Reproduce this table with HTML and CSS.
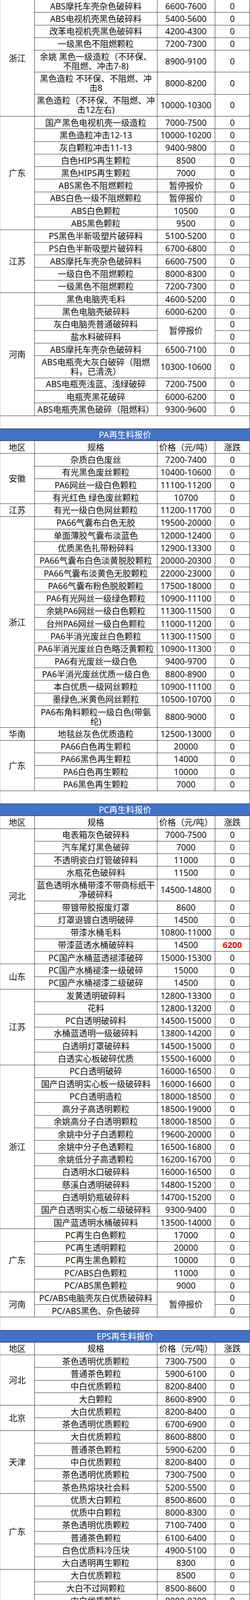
FILE: index.html
```html
<!DOCTYPE html>
<html lang="zh-CN">
<head>
<meta charset="utf-8">
<title>再生料报价</title>
<link rel="stylesheet" href="styles.css">
</head>
<body>
<div class="page">

<section class="tbl">
  <div class="region"><div class="c c1">浙江</div><div class="items">
    <div class="r"><div class="c c2">ABS摩托车壳杂色破碎料</div><div class="c c3">6600-7600</div><div class="c c4">0</div></div>
    <div class="r"><div class="c c2">ABS电视机壳黑色破碎料</div><div class="c c3">5400-5600</div><div class="c c4">0</div></div>
    <div class="r"><div class="c c2">改苯电视机壳黑色破碎料</div><div class="c c3">4200-4300</div><div class="c c4">0</div></div>
    <div class="r"><div class="c c2">一级黑色不阻燃颗粒</div><div class="c c3">7200-7300</div><div class="c c4">0</div></div>
    <div class="r two"><div class="c c2">余姚 黑色一级造粒（不环保、<br>不阻燃、冲击7-8)</div><div class="c c3">8900-9100</div><div class="c c4">0</div></div>
    <div class="r two"><div class="c c2">黑色造粒 不环保、不阻燃、冲<br>击8</div><div class="c c3">8000-8200</div><div class="c c4">0</div></div>
    <div class="r two"><div class="c c2">黑色造粒（不环保、不阻燃、冲<br>击12左右)</div><div class="c c3">10000-10300</div><div class="c c4">0</div></div>
  </div></div>
  <div class="region"><div class="c c1">广东</div><div class="items">
    <div class="r"><div class="c c2">国产黑色电视机壳一级造粒</div><div class="c c3">7000-7500</div><div class="c c4">0</div></div>
    <div class="r"><div class="c c2">黑色造粒冲击12-13</div><div class="c c3">10000-10200</div><div class="c c4">0</div></div>
    <div class="r"><div class="c c2">灰白颗粒冲击11-13</div><div class="c c3">9400-9800</div><div class="c c4">0</div></div>
    <div class="r"><div class="c c2">白色HIPS再生颗粒</div><div class="c c3">8500</div><div class="c c4">0</div></div>
    <div class="r"><div class="c c2">黑色HIPS再生颗粒</div><div class="c c3">7000</div><div class="c c4">0</div></div>
    <div class="r"><div class="c c2">ABS黑色不阻燃颗粒</div><div class="c c3">暂停报价</div><div class="c c4">0</div></div>
    <div class="r"><div class="c c2">ABS白色一级不阻燃颗粒</div><div class="c c3">暂停报价</div><div class="c c4">0</div></div>
    <div class="r"><div class="c c2">ABS白色颗粒</div><div class="c c3">10500</div><div class="c c4">0</div></div>
    <div class="r"><div class="c c2">ABS黑色颗粒</div><div class="c c3">9500</div><div class="c c4">0</div></div>
  </div></div>
  <div class="region"><div class="c c1">江苏</div><div class="items">
    <div class="r"><div class="c c2">PS黑色半新吸塑片破碎料</div><div class="c c3">5100-5200</div><div class="c c4">0</div></div>
    <div class="r"><div class="c c2">PS白色半新吸塑片破碎料</div><div class="c c3">6700-6800</div><div class="c c4">0</div></div>
    <div class="r"><div class="c c2">ABS摩托车壳杂色破碎料</div><div class="c c3">6600-7500</div><div class="c c4">0</div></div>
    <div class="r"><div class="c c2">一级白色不阻燃颗粒</div><div class="c c3">8000-8300</div><div class="c c4">0</div></div>
    <div class="r"><div class="c c2">一级黑色不阻燃颗粒</div><div class="c c3">7200-7300</div><div class="c c4">0</div></div>
  </div></div>
  <div class="region"><div class="c c1">河南</div><div class="items">
    <div class="r"><div class="c c2">黑色电脑壳毛料</div><div class="c c3">4600-5200</div><div class="c c4">0</div></div>
    <div class="r"><div class="c c2">黑色电脑壳破碎料</div><div class="c c3">6000-6200</div><div class="c c4">0</div></div>
    <div class="grp">
      <div class="col c2"><div class="c c2 h1">灰白电脑壳普通破碎料</div><div class="c c2 h1">盐水料破碎料</div></div>
      <div class="c c3">暂停报价</div>
      <div class="col c4"><div class="c c4 h1">0</div><div class="c c4 h1">0</div></div>
    </div>
    <div class="r"><div class="c c2">ABS摩托车壳杂色破碎料</div><div class="c c3">6500-7100</div><div class="c c4">0</div></div>
    <div class="r two"><div class="c c2">ABS电瓶壳大灰白破碎（阻燃<br>料，已清洗）</div><div class="c c3">10300-10600</div><div class="c c4">0</div></div>
    <div class="r"><div class="c c2">ABS电瓶壳浅蓝、浅绿破碎</div><div class="c c3">7200-7500</div><div class="c c4">0</div></div>
    <div class="r"><div class="c c2">电瓶壳黑花破碎</div><div class="c c3">6000-6200</div><div class="c c4">0</div></div>
    <div class="r"><div class="c c2">ABS电瓶壳黑色破碎（阻燃料）</div><div class="c c3">9300-9600</div><div class="c c4">0</div></div>
  </div></div>
</section>

<div class="gap"></div>

<section class="tbl">
  <div class="title">PA再生料报价</div>
  <div class="r"><div class="c c1">地区</div><div class="c c2">规格</div><div class="c c3">价格（元/吨）</div><div class="c c4">涨跌</div></div>
  <div class="region"><div class="c c1">安徽</div><div class="items">
    <div class="r"><div class="c c2">杂质白色废丝</div><div class="c c3">7200-7400</div><div class="c c4">0</div></div>
    <div class="r"><div class="c c2">有光黑色废丝颗粒</div><div class="c c3">10400-10600</div><div class="c c4">0</div></div>
    <div class="r"><div class="c c2">PA6网丝一级白色颗粒</div><div class="c c3">11100-11200</div><div class="c c4">0</div></div>
    <div class="r"><div class="c c2">有光红色 绿色废丝颗粒</div><div class="c c3">10700</div><div class="c c4">0</div></div>
  </div></div>
  <div class="region"><div class="c c1">江苏</div><div class="items">
    <div class="r"><div class="c c2">有光一级白色网丝颗粒</div><div class="c c3">11200-11700</div><div class="c c4">0</div></div>
  </div></div>
  <div class="region"><div class="c c1">浙江</div><div class="items">
    <div class="r"><div class="c c2">PA66气囊布白色无胶</div><div class="c c3">19500-20000</div><div class="c c4">0</div></div>
    <div class="r"><div class="c c2">单面薄胶气囊布淡蓝色</div><div class="c c3">12000-12400</div><div class="c c4">0</div></div>
    <div class="r"><div class="c c2">优质黑色扎带粉碎料</div><div class="c c3">12900-13300</div><div class="c c4">0</div></div>
    <div class="r"><div class="c c2">PA66气囊布白色淡黄脱胶颗粒</div><div class="c c3">20000-20300</div><div class="c c4">0</div></div>
    <div class="r"><div class="c c2">PA66气囊布淡黄色无胶颗粒</div><div class="c c3">22000-23000</div><div class="c c4">0</div></div>
    <div class="r"><div class="c c2">PA66气囊布粉色脱胶颗粒</div><div class="c c3">17500-18000</div><div class="c c4">0</div></div>
    <div class="r"><div class="c c2">PA6有光网丝一级绿色颗粒</div><div class="c c3">10900-11100</div><div class="c c4">0</div></div>
    <div class="r"><div class="c c2">余姚PA6网丝一级白色颗粒</div><div class="c c3">11300-11500</div><div class="c c4">0</div></div>
    <div class="r"><div class="c c2">台州PA6网丝一级白色颗粒</div><div class="c c3">11000-11200</div><div class="c c4">0</div></div>
    <div class="r"><div class="c c2">PA6半消光废丝白色颗粒</div><div class="c c3">11300-11500</div><div class="c c4">0</div></div>
    <div class="r"><div class="c c2">PA6半消光废丝白色略泛黄颗粒</div><div class="c c3">10900-11300</div><div class="c c4">0</div></div>
    <div class="r"><div class="c c2">PA6有光废丝一级白色</div><div class="c c3">9400-9700</div><div class="c c4">0</div></div>
    <div class="r"><div class="c c2">PA6半消光废丝优质一级白色</div><div class="c c3">8800-8900</div><div class="c c4">0</div></div>
    <div class="r"><div class="c c2">本白优质一级网丝颗粒</div><div class="c c3">10900-11100</div><div class="c c4">0</div></div>
    <div class="r"><div class="c c2">墨绿色,米黄色网丝颗粒</div><div class="c c3">10500-10700</div><div class="c c4">0</div></div>
    <div class="r two"><div class="c c2">PA6布角料颗粒一级白色(带氨<br>纶)</div><div class="c c3">8800-9000</div><div class="c c4">0</div></div>
  </div></div>
  <div class="region"><div class="c c1">华南</div><div class="items">
    <div class="r"><div class="c c2">地毯丝灰色优质造粒</div><div class="c c3">12500-13000</div><div class="c c4">0</div></div>
  </div></div>
  <div class="region"><div class="c c1">广东</div><div class="items">
    <div class="r"><div class="c c2">PA66白色再生颗粒</div><div class="c c3">20000</div><div class="c c4">0</div></div>
    <div class="r"><div class="c c2">PA66黑色再生颗粒</div><div class="c c3">14000</div><div class="c c4">0</div></div>
    <div class="r"><div class="c c2">PA6白色再生颗粒</div><div class="c c3">10000</div><div class="c c4">0</div></div>
    <div class="r"><div class="c c2">PA6黑色再生颗粒</div><div class="c c3">7000</div><div class="c c4">0</div></div>
  </div></div>
</section>

<div class="gap"></div>

<section class="tbl">
  <div class="title">PC再生料报价</div>
  <div class="r"><div class="c c1">地区</div><div class="c c2">规格</div><div class="c c3">价格（元/吨）</div><div class="c c4">涨跌</div></div>
  <div class="region"><div class="c c1">河北</div><div class="items">
    <div class="r"><div class="c c2">电表箱灰色破碎料</div><div class="c c3">7000-7500</div><div class="c c4">0</div></div>
    <div class="r"><div class="c c2">汽车尾灯黑色破碎</div><div class="c c3">7000</div><div class="c c4">0</div></div>
    <div class="r"><div class="c c2">不透明瓷白灯管破碎料</div><div class="c c3">11000</div><div class="c c4">0</div></div>
    <div class="r"><div class="c c2">水瓶花色破碎料</div><div class="c c3">11500</div><div class="c c4">0</div></div>
    <div class="r two"><div class="c c2">蓝色透明水桶带漆不带商标纸干<br>净破碎料</div><div class="c c3">14500-14800</div><div class="c c4">0</div></div>
    <div class="r"><div class="c c2">带镀带胶报废灯罩</div><div class="c c3">8600</div><div class="c c4">0</div></div>
    <div class="r"><div class="c c2">灯罩退镀白透明破碎</div><div class="c c3">14500</div><div class="c c4">0</div></div>
    <div class="r"><div class="c c2">带漆水桶毛料</div><div class="c c3">10800-11000</div><div class="c c4">0</div></div>
    <div class="r"><div class="c c2">带漆蓝透水桶破碎料</div><div class="c c3">14500</div><div class="c c4 up">6200</div></div>
    <div class="r"><div class="c c2">PC国产水桶蓝透褪漆破碎</div><div class="c c3">15000-15300</div><div class="c c4">0</div></div>
  </div></div>
  <div class="region"><div class="c c1">山东</div><div class="items">
    <div class="r"><div class="c c2">PC国产水桶褪漆一级破碎</div><div class="c c3">15000</div><div class="c c4">0</div></div>
    <div class="r"><div class="c c2">PC国产水桶褪漆二级破碎</div><div class="c c3">14500</div><div class="c c4">0</div></div>
  </div></div>
  <div class="region"><div class="c c1">江苏</div><div class="items">
    <div class="r"><div class="c c2">发黄透明破碎料</div><div class="c c3">12800-13300</div><div class="c c4">0</div></div>
    <div class="r"><div class="c c2">花料</div><div class="c c3">12800-13200</div><div class="c c4">0</div></div>
    <div class="r"><div class="c c2">PC白透明破碎料</div><div class="c c3">14500-15000</div><div class="c c4">0</div></div>
    <div class="r"><div class="c c2">水桶蓝透明一级破碎料</div><div class="c c3">13800-14200</div><div class="c c4">0</div></div>
    <div class="r"><div class="c c2">白透明灯罩破碎料</div><div class="c c3">14500-15000</div><div class="c c4">0</div></div>
    <div class="r"><div class="c c2">白透实心板破碎优质</div><div class="c c3">15500-16000</div><div class="c c4">0</div></div>
  </div></div>
  <div class="region"><div class="c c1">浙江</div><div class="items">
    <div class="r"><div class="c c2">PC白透明破碎</div><div class="c c3">16000-16500</div><div class="c c4">0</div></div>
    <div class="r"><div class="c c2">国产白透明实心板一级破碎料</div><div class="c c3">16000-16600</div><div class="c c4">0</div></div>
    <div class="r"><div class="c c2">PC白透明造粒</div><div class="c c3">18000-18500</div><div class="c c4">0</div></div>
    <div class="r"><div class="c c2">高分子高透明颗粒</div><div class="c c3">18500-19000</div><div class="c c4">0</div></div>
    <div class="r"><div class="c c2">余姚高分子白透明颗粒</div><div class="c c3">18000-18500</div><div class="c c4">0</div></div>
    <div class="r"><div class="c c2">余姚中分子白透颗粒</div><div class="c c3">19600-20000</div><div class="c c4">0</div></div>
    <div class="r"><div class="c c2">余姚中分子色透颗粒</div><div class="c c3">16500-16800</div><div class="c c4">0</div></div>
    <div class="r"><div class="c c2">余姚低分子高透颗粒</div><div class="c c3">16200-16700</div><div class="c c4">0</div></div>
    <div class="r"><div class="c c2">白透明水口破碎料</div><div class="c c3">16000-16500</div><div class="c c4">0</div></div>
    <div class="r"><div class="c c2">慈溪白透明破碎料</div><div class="c c3">14800-15200</div><div class="c c4">0</div></div>
    <div class="r"><div class="c c2">白透明奶瓶破碎料</div><div class="c c3">14700-15200</div><div class="c c4">0</div></div>
    <div class="r"><div class="c c2">国产白透明实心板二级破碎料</div><div class="c c3">9300-9400</div><div class="c c4">0</div></div>
    <div class="r"><div class="c c2">国产蓝透明水桶破碎料</div><div class="c c3">13500-14000</div><div class="c c4">0</div></div>
  </div></div>
  <div class="region"><div class="c c1">广东</div><div class="items">
    <div class="r"><div class="c c2">PC再生白色颗粒</div><div class="c c3">17000</div><div class="c c4">0</div></div>
    <div class="r"><div class="c c2">PC再生透明颗粒</div><div class="c c3">20000</div><div class="c c4">0</div></div>
    <div class="r"><div class="c c2">PC再生黑色颗粒</div><div class="c c3">10000</div><div class="c c4">0</div></div>
    <div class="r"><div class="c c2">PC/ABS白色颗粒</div><div class="c c3">11000</div><div class="c c4">0</div></div>
    <div class="r"><div class="c c2">PC/ABS黑色颗粒</div><div class="c c3">9000</div><div class="c c4">0</div></div>
  </div></div>
  <div class="region"><div class="c c1">河南</div><div class="items">
    <div class="grp">
      <div class="col c2"><div class="c c2 h1">PC/ABS电脑壳灰白优质破碎料</div><div class="c c2 h1">PC/ABS黑色、杂色破碎</div></div>
      <div class="c c3">暂停报价</div>
      <div class="col c4"><div class="c c4 h1">0</div><div class="c c4 h1">0</div></div>
    </div>
  </div></div>
</section>

<div class="gap"></div>

<section class="tbl">
  <div class="title">EPS再生料报价</div>
  <div class="r"><div class="c c1">地区</div><div class="c c2">规格</div><div class="c c3">价格（元/吨）</div><div class="c c4">涨跌</div></div>
  <div class="region"><div class="c c1">河北</div><div class="items">
    <div class="r"><div class="c c2">茶色透明优质颗粒</div><div class="c c3">7300-7500</div><div class="c c4">0</div></div>
    <div class="r"><div class="c c2">普通茶色颗粒</div><div class="c c3">5900-6100</div><div class="c c4">0</div></div>
    <div class="r"><div class="c c2">中白优质颗粒</div><div class="c c3">8200-8400</div><div class="c c4">0</div></div>
    <div class="r"><div class="c c2">大白颗粒</div><div class="c c3">8600-8900</div><div class="c c4">0</div></div>
  </div></div>
  <div class="region"><div class="c c1">北京</div><div class="items">
    <div class="r"><div class="c c2">大白优质颗粒</div><div class="c c3">8200-8400</div><div class="c c4">0</div></div>
    <div class="r"><div class="c c2">茶色透明优质颗粒</div><div class="c c3">6700-6900</div><div class="c c4">0</div></div>
  </div></div>
  <div class="region"><div class="c c1">天津</div><div class="items">
    <div class="r"><div class="c c2">大白优质颗粒</div><div class="c c3">8600-8800</div><div class="c c4">0</div></div>
    <div class="r"><div class="c c2">普通茶色颗粒</div><div class="c c3">5900-6200</div><div class="c c4">0</div></div>
    <div class="r"><div class="c c2">中白优质颗粒</div><div class="c c3">8200-8400</div><div class="c c4">0</div></div>
    <div class="r"><div class="c c2">茶色透明优质颗粒</div><div class="c c3">7300-7500</div><div class="c c4">0</div></div>
    <div class="r"><div class="c c2">茶色热熔块社会料</div><div class="c c3">5200-5500</div><div class="c c4">0</div></div>
  </div></div>
  <div class="region"><div class="c c1">广东</div><div class="items">
    <div class="r"><div class="c c2">优质大白颗粒</div><div class="c c3">8500-8600</div><div class="c c4">0</div></div>
    <div class="r"><div class="c c2">优质中白颗粒</div><div class="c c3">8000-8300</div><div class="c c4">0</div></div>
    <div class="r"><div class="c c2">茶色透明优质颗粒</div><div class="c c3">7100-7400</div><div class="c c4">0</div></div>
    <div class="r"><div class="c c2">普通茶色颗粒</div><div class="c c3">6100-6400</div><div class="c c4">0</div></div>
    <div class="r"><div class="c c2">白色优质料冷压块</div><div class="c c3">4900-5100</div><div class="c c4">0</div></div>
    <div class="r"><div class="c c2">大白透明再生颗粒</div><div class="c c3">8300</div><div class="c c4">0</div></div>
  </div></div>
  <div class="region"><div class="c c1">福建</div><div class="items">
    <div class="r"><div class="c c2">大白优质颗粒</div><div class="c c3">8500</div><div class="c c4">0</div></div>
    <div class="r"><div class="c c2">大白不过网颗粒</div><div class="c c3">8500-8600</div><div class="c c4">0</div></div>
    <div class="r"><div class="c c2">中白优质颗粒</div><div class="c c3">8000-8200</div><div class="c c4">0</div></div>
    <div class="r"><div class="c c2">中白不过网颗粒</div><div class="c c3">7300-7500</div><div class="c c4">0</div></div>
    <div class="r"><div class="c c2">普通茶色颗粒</div><div class="c c3">6100-6300</div><div class="c c4">0</div></div>
    <div class="r"><div class="c c2">茶透优质颗粒</div><div class="c c3">7100-7300</div><div class="c c4">0</div></div>
  </div></div>
  <div class="region"><div class="c c1">山东</div><div class="items">
    <div class="r"><div class="c c2">中白优质颗粒</div><div class="c c3">8100-8400</div><div class="c c4">0</div></div>
    <div class="r"><div class="c c2">茶色透明优质颗粒</div><div class="c c3">7200-7500</div><div class="c c4">0</div></div>
    <div class="r"><div class="c c2">茶色普通颗粒</div><div class="c c3">5800-6100</div><div class="c c4">0</div></div>
    <div class="r"><div class="c c2">白色一级造粒</div><div class="c c3">7100</div><div class="c c4">0</div></div>
    <div class="r"><div class="c c2">大白优质颗粒</div><div class="c c3">8600-8700</div><div class="c c4">0</div></div>
    <div class="r"><div class="c c2">茶色透明小机料</div><div class="c c3">6300-6500</div><div class="c c4">0</div></div>
    <div class="r"><div class="c c2">优质料热熔块</div><div class="c c3">5100-5500</div><div class="c c4">0</div></div>
    <div class="r"><div class="c c2">优质料冷压块</div><div class="c c3">4900-5300</div><div class="c c4">0</div></div>
  </div></div>
  <div class="region"><div class="c c1">安徽</div><div class="items">
    <div class="r"><div class="c c2">茶色热熔块</div><div class="c c3">5200-5500</div><div class="c c4">0</div></div>
  </div></div>
  <div class="region"><div class="c c1">江苏</div><div class="items">
    <div class="r"><div class="c c2">大白优质料</div><div class="c c3">8500-8700</div><div class="c c4">0</div></div>
    <div class="r"><div class="c c2">中白优质料</div><div class="c c3">8100-8200</div><div class="c c4">0</div></div>
    <div class="r"><div class="c c2">普通茶色颗粒</div><div class="c c3">6000-6200</div><div class="c c4">0</div></div>
    <div class="r"><div class="c c2">茶色透明优质颗粒</div><div class="c c3">7200-7400</div><div class="c c4">0</div></div>
  </div></div>
  <div class="region"><div class="c c1">河南</div><div class="items">
    <div class="r"><div class="c c2">大白优质颗粒</div><div class="c c3">8600-8700</div><div class="c c4">0</div></div>
    <div class="r"><div class="c c2">茶色透明优质颗粒</div><div class="c c3">7200-7500</div><div class="c c4">0</div></div>
    <div class="r"><div class="c c2">中白优质颗粒</div><div class="c c3">8100-8400</div><div class="c c4">0</div></div>
    <div class="r"><div class="c c2">普通茶色颗粒</div><div class="c c3">5900-6100</div><div class="c c4">0</div></div>
    <div class="r"><div class="c c2">中白优质颗粒</div><div class="c c3">8100-8400</div><div class="c c4">0</div></div>
    <div class="r"><div class="c c2">茶色透明颗粒</div><div class="c c3">7200-7500</div><div class="c c4">0</div></div>
  </div></div>
</section>

<div class="gap"></div>

<section class="tbl">
  <div class="title">PMMA再生料报价</div>
  <div class="r"><div class="c c1">地区</div><div class="c c2">规格</div><div class="c c3">价格（元/吨）</div><div class="c c4">涨跌</div></div>
  <div class="region"><div class="c c1">广东</div><div class="items">
    <div class="r"><div class="c c2">透明再生颗粒</div><div class="c c3">11000</div><div class="c c4">0</div></div>
    <div class="r"><div class="c c2">白色再生颗粒</div><div class="c c3">10000</div><div class="c c4">0</div></div>
    <div class="r"><div class="c c2">黑色再生颗粒</div><div class="c c3">8000</div><div class="c c4">0</div></div>
  </div></div>
  <div class="region"><div class="c c1">江苏</div><div class="items">
    <div class="r"><div class="c c2">净色板材</div><div class="c c3">3600-4600</div><div class="c c4">0</div></div>
    <div class="r"><div class="c c2">原色透明破碎</div><div class="c c3">4800-5200</div><div class="c c4">0</div></div>
    <div class="r"><div class="c c2">废片材</div><div class="c c3">3500-3600</div><div class="c c4">0</div></div>
    <div class="r"><div class="c c2">杂色板材</div><div class="c c3">3200-3300</div><div class="c c4">0</div></div>
    <div class="r"><div class="c c2">杂色胶块</div><div class="c c3">3400-3600</div><div class="c c4">0</div></div>
    <div class="r"><div class="c c2">杂色破碎料</div><div class="c c3">3800-3900</div><div class="c c4">0</div></div>
  </div></div>
</section>

<div class="gap"></div>

<section class="tbl">
  <div class="title">POM再生料报价</div>
  <div class="r"><div class="c c1">地区</div><div class="c c2">规格</div><div class="c c3">价格（元/吨）</div><div class="c c4">涨跌</div></div>
  <div class="region"><div class="c c1">广东</div><div class="items">
    <div class="r"><div class="c c2">POM黑色粒料</div><div class="c c3">9000</div><div class="c c4">0</div></div>
    <div class="r"><div class="c c2">POM白色粒料</div><div class="c c3">11000</div><div class="c c4">0</div></div>
  </div></div>
</section>

<div class="gap"></div>

<section class="tbl">
  <div class="title">EVA再生料报价</div>
  <div class="r"><div class="c c1">地区</div><div class="c c2">规格</div><div class="c c3">价格（元/吨）</div><div class="c c4">涨跌</div></div>
  <div class="region"><div class="c c1">河北</div><div class="items">
    <div class="r"><div class="c c2">保定EVA造粒</div><div class="c c3">5900-6000</div><div class="c c4">0</div></div>
    <div class="r"><div class="c c2">玉田EVA造粒</div><div class="c c3">6000-6200</div><div class="c c4">0</div></div>
  </div></div>
  <div class="region"><div class="c c1">山东</div><div class="items">
    <div class="r"><div class="c c2">临沂EVA造粒</div><div class="c c3">5800-5900</div><div class="c c4">0</div></div>
    <div class="r"><div class="c c2">莒县EVA造粒</div><div class="c c3">6200</div><div class="c c4">0</div></div>
    <div class="r"><div class="c c2">EVA白透一级颗粒</div><div class="c c3">6100-6200</div><div class="c c4">0</div></div>
  </div></div>
  <div class="region"><div class="c c1">广东</div><div class="items">
    <div class="r"><div class="c c2">EVA透明颗粒</div><div class="c c3">7000</div><div class="c c4">0</div></div>
    <div class="r"><div class="c c2">EVA白色再生颗粒</div><div class="c c3">6000</div><div class="c c4">0</div></div>
  </div></div>
  <div class="r"><div class="c full">注：表格中报价来自网络，均为不含税到厂价</div></div>
</section>

</div>
</body>
</html>
```

FILE: styles.css
```css
html, body {
  margin: 0;
  padding: 0;
  background: #ffffff;
}

body {
  font-family: "Noto Sans", "Noto Sans CJK SC", sans-serif;
  font-size: 21.6px;
  color: #111111;
}

.page {
  width: 640px;
  box-shadow: inset 1px 0 0 #c8c8c8;
}

.tbl {
  display: flex;
  flex-direction: column;
}

.r {
  display: flex;
  height: 32.29px;
}

.r.two {
  height: 56.3px;
}

.c {
  display: flex;
  align-items: center;
  justify-content: center;
  text-align: center;
  box-sizing: border-box;
  border-right: 1px solid #262626;
  border-bottom: 1px solid #262626;
  line-height: 24px;
  white-space: nowrap;
  overflow: hidden;
  flex: none;
}

.c1 { width: 89px; }
.c2 { width: 313.5px; }
.c3 { width: 148px; }
.c4 { width: 89.5px; }
.full { width: 640px; }

.region {
  display: flex;
}

.items {
  display: flex;
  flex-direction: column;
  width: 551px;
}

.grp {
  display: flex;
}

.col {
  display: flex;
  flex-direction: column;
  flex: none;
}

.h1 {
  height: 32.29px;
}

.title {
  box-sizing: border-box;
  height: 32.29px;
  display: flex;
  align-items: center;
  justify-content: center;
  background: #4472c4;
  color: #ffffff;
  line-height: 24px;
  border-top: 1px solid #262626;
  border-bottom: 1px solid #262626;
}

.up {
  color: #ff0000;
  font-weight: 700;
}

.gap {
  height: 32.29px;
  box-sizing: border-box;
  border-right: 1px solid #262626;
}
```
